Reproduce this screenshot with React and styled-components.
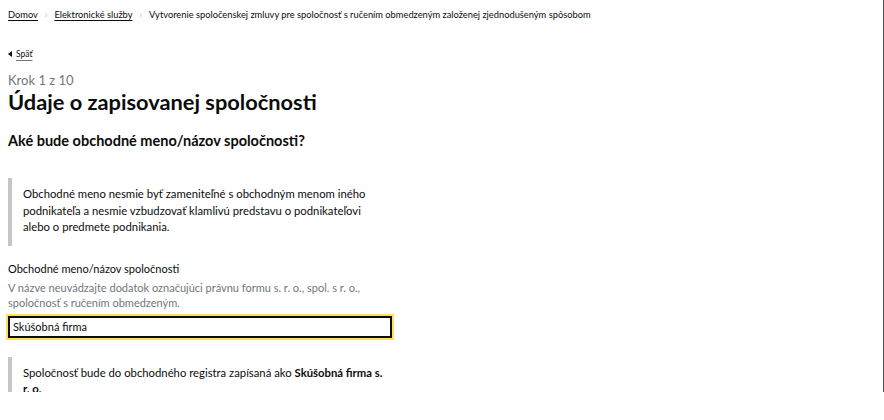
import React from "react";
import styled, { createGlobalStyle } from "styled-components";

const GlobalStyle = createGlobalStyle`
  html, body {
    margin: 0;
    padding: 0;
    background: #ffffff;
  }
  body {
    font-family: Lato, "Open Sans", sans-serif;
    color: #0b0c0c;
  }
`;

const Frame = styled.div`
  height: 392px;
  overflow: hidden;
  border-right: 1px solid #505050;
  padding: 0 8px;
`;

const Breadcrumbs = styled.nav`
  display: flex;
  align-items: center;
  gap: 7px;
  padding-top: 7px;
  height: 14px;
  font-size: 9.3px;
  color: #0b0c0c;
  white-space: nowrap;
`;

const Crumb = styled.a`
  color: #0b0c0c;
  text-decoration: underline;
  text-underline-offset: 2px;
`;

const Chevron = styled.span`
  color: #b1b4b6;
  font-size: 9px;
`;

const BackLink = styled.a`
  display: inline-flex;
  align-items: center;
  gap: 4px;
  margin-top: 28px;
  font-size: 8.5px;
  color: #0b0c0c;
  text-decoration: underline;
  text-underline-offset: 3px;
  text-decoration-color: #777;
`;

const Caption = styled.div`
  margin-top: 12px;
  font-size: 13px;
  line-height: 16px;
  color: #6f777b;
`;

const Heading = styled.h1`
  margin: 1px 0 0;
  font-size: 21.8px;
  line-height: 26px;
  font-weight: 700;
`;

const Question = styled.h2`
  margin: 17px 0 0;
  font-size: 14.5px;
  line-height: 18px;
  font-weight: 700;
`;

const Inset = styled.div`
  margin-top: ${(p) => p.$top}px;
  width: 362px;
  border-left: 4px solid #c4c6c8;
  padding: 8px 0 10px 11px;
  font-size: 11.3px;
  line-height: 16.5px;
  color: #0b0c0c;
`;

const Field = styled.div`
  margin-top: 15px;
  width: 384px;
`;

const Label = styled.label`
  display: block;
  font-size: 11px;
  line-height: 16px;
`;

const Hint = styled.div`
  margin-top: 3px;
  font-size: 11px;
  line-height: 15px;
  color: #6f777b;
`;

const Input = styled.input`
  display: block;
  box-sizing: border-box;
  width: 384px;
  height: 22px;
  margin-top: 6px;
  padding: 0 3px;
  border: 2px solid #0b0c0c;
  outline: none;
  box-shadow: 0 0 0 2px #ffe05a;
  font-family: Lato, "Open Sans", sans-serif;
  font-size: 11px;
  color: #0b0c0c;
  caret-color: #0b0c0c;
`;

function BackArrow() {
  return (
    <svg width="4" height="6" viewBox="0 0 4 6">
      <path d="M4 0 L0 3 L4 6 Z" fill="#0b0c0c" />
    </svg>
  );
}

export default function App() {
  return (
    <>
      <GlobalStyle />
      <Frame>
        <Breadcrumbs>
          <Crumb>Domov</Crumb>
          <Chevron>›</Chevron>
          <Crumb>Elektronické služby</Crumb>
          <Chevron>›</Chevron>
          <span>
            Vytvorenie spoločenskej zmluvy pre spoločnosť s ručením obmedzeným
            založenej zjednodušeným spôsobom
          </span>
        </Breadcrumbs>
        <BackLink>
          <BackArrow />
          Späť
        </BackLink>
        <Caption>Krok 1 z 10</Caption>
        <Heading>Údaje o zapisovanej spoločnosti</Heading>
        <Question>Aké bude obchodné meno/názov spoločnosti?</Question>
        <Inset $top={28}>
          Obchodné meno nesmie byť zameniteľné s obchodným menom iného
          podnikateľa a nesmie vzbudzovať klamlivú predstavu o podnikateľovi
          alebo o predmete podnikania.
        </Inset>
        <Field>
          <Label>Obchodné meno/názov spoločnosti</Label>
          <Hint>
            V názve neuvádzajte dodatok označujúci právnu formu s. r. o., spol.
            s r. o., spoločnosť s ručením obmedzeným.
          </Hint>
          <Input defaultValue="Skúšobná firma" autoFocus />
        </Field>
        <Inset $top={19}>
          Spoločnosť bude do obchodného registra zapísaná ako{" "}
          <b>Skúšobná firma s. r. o.</b>
        </Inset>
      </Frame>
    </>
  );
}
